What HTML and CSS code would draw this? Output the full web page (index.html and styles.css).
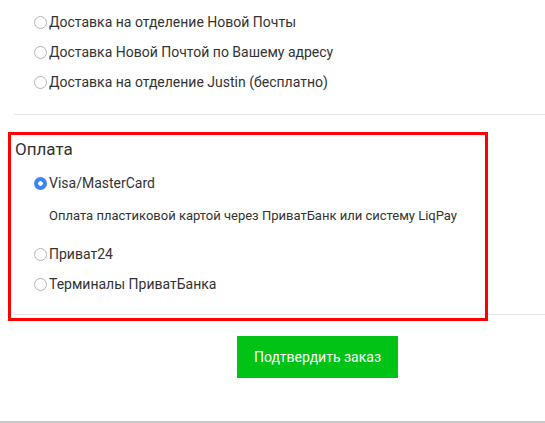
FILE: index.html
```html
<!DOCTYPE html>
<html lang="ru">
<head>
<meta charset="utf-8">
<link rel="stylesheet" href="styles.css">
</head>
<body>
<div class="page">
  <section class="section delivery">
    <label class="row"><span class="radio"></span><span>Доставка на отделение Новой Почты</span></label>
    <label class="row"><span class="radio"></span><span>Доставка Новой Почтой по Вашему адресу</span></label>
    <label class="row"><span class="radio"></span><span>Доставка на отделение Justin (бесплатно)</span></label>
  </section>
  <section class="section payment">
    <h3 class="title">Оплата</h3>
    <label class="row row-visa"><span class="radio checked"></span><span>Visa/MasterCard</span></label>
    <p class="desc">Оплата пластиковой картой через ПриватБанк или систему LiqPay</p>
    <label class="row row-p24"><span class="radio"></span><span>Приват24</span></label>
    <label class="row"><span class="radio"></span><span>Терминалы ПриватБанка</span></label>
  </section>
  <div class="actions">
    <button class="confirm">Подтвердить заказ</button>
  </div>
  <div class="footer-line"></div>
  <div class="highlight"></div>
</div>
</body>
</html>
```

FILE: styles.css
```css
html, body {
  margin: 0;
  padding: 0;
  background: #fff;
}
body {
  font-family: Roboto, "Liberation Sans", sans-serif;
  color: #333;
  font-size: 14px;
}
.page {
  position: relative;
  width: 545px;
  height: 423px;
  overflow: hidden;
}
.section {
  margin-left: 14px;
  border-bottom: 1px solid #e5e5e5;
}
.delivery {
  padding-top: 7px;
  padding-bottom: 17px;
}
.payment {
  padding-top: 22px;
  padding-bottom: 15px;
}
.row {
  display: flex;
  align-items: center;
  height: 30px;
  padding-left: 20px;
  gap: 2px;
  line-height: 1;
}
.radio {
  box-sizing: border-box;
  width: 13px;
  height: 13px;
  border-radius: 50%;
  border: 1px solid #b5b5b5;
  background: #fff;
  flex: none;
}
.radio.checked {
  border: none;
  background: radial-gradient(circle, #fff 0 2px, #3b82f6 2.6px);
}
.title {
  margin: 0 0 7px 1px;
  font-weight: normal;
  font-size: 17px;
  line-height: 24px;
  color: #333;
}
.desc {
  margin: 8px 0 13px 35px;
  font-size: 13px;
  line-height: 20px;
}
.actions {
  padding: 21px 0 0 237px;
  height: 42px;
}
.confirm {
  width: 161px;
  height: 42px;
  border: none;
  background: #00c316;
  color: #fff;
  font-family: Roboto, "Liberation Sans", sans-serif;
  font-size: 14px;
  padding: 0;
}
.footer-line {
  position: absolute;
  left: 0;
  right: 0;
  bottom: 0;
  height: 2px;
  background: #c8c8c8;
}
.highlight {
  position: absolute;
  left: 8px;
  top: 132px;
  width: 480px;
  height: 189px;
  box-sizing: border-box;
  border: 3px solid #ff0000;
  pointer-events: none;
}
```
